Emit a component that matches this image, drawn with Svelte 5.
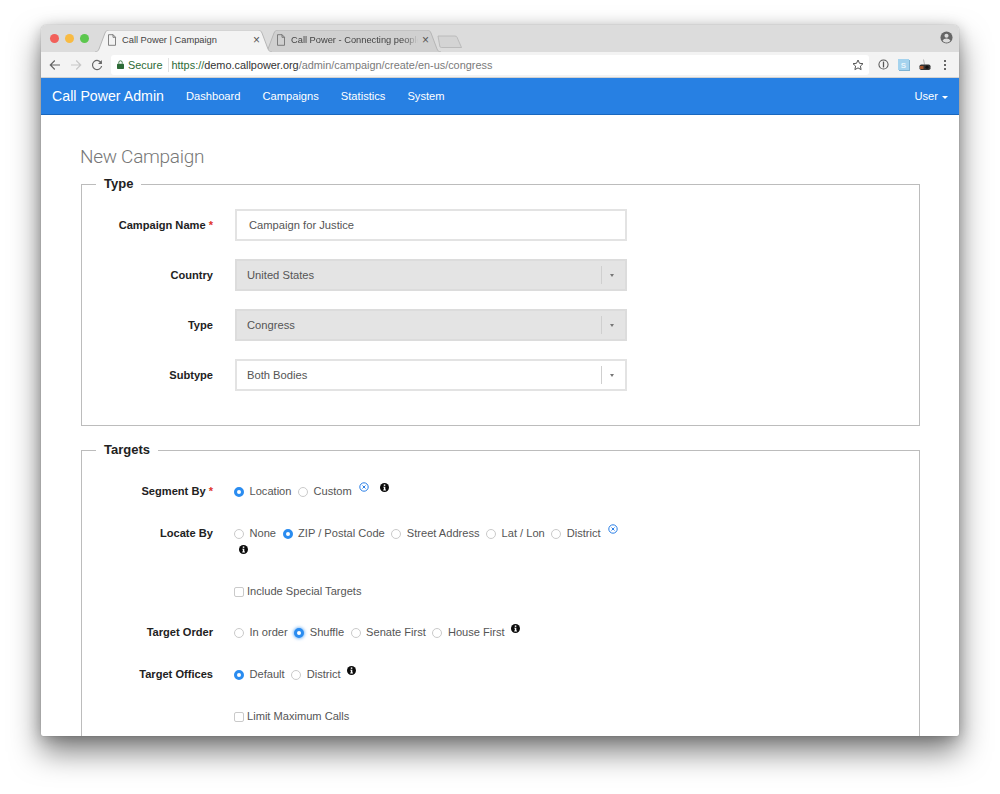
<script>
  const tabs = [
    { title: 'Call Power | Campaign', active: true },
    { title: 'Call Power - Connecting people', active: false }
  ];
  const selects = [
    { label: 'Country', value: 'United States', disabled: true },
    { label: 'Type', value: 'Congress', disabled: true },
    { label: 'Subtype', value: 'Both Bodies', disabled: false }
  ];
  const rows = [
    { label: 'Segment By', required: true, options: ['Location', 'Custom'], checked: 'Location', clear: true, info: true },
    { label: 'Locate By', options: ['None', 'ZIP / Postal Code', 'Street Address', 'Lat / Lon', 'District'], checked: 'ZIP / Postal Code', clear: true, info: true, wraps: true },
    { check: 'Include Special Targets' },
    { label: 'Target Order', options: ['In order', 'Shuffle', 'Senate First', 'House First'], checked: 'Shuffle', focus: true, info: true },
    { label: 'Target Offices', options: ['Default', 'District'], checked: 'Default', info: true },
    { check: 'Limit Maximum Calls' }
  ];
</script>

{#snippet pageIcon()}
  <svg class="page-icon" viewBox="0 0 10 12" width="10" height="12" aria-hidden="true">
    <path d="M1.5 .7h4.6l2.4 2.5v8.1h-7z M6 .7v2.6h2.5" fill="none" stroke="#666" stroke-width=".8" />
  </svg>
{/snippet}

{#snippet infoIcon()}
  <svg class="info" viewBox="0 0 10 10" width="9" height="9" aria-hidden="true">
    <circle cx="5" cy="5" r="5" fill="#0b0b0b" />
    <rect x="4.2" y="1.6" width="1.7" height="1.6" fill="#fff" />
    <path d="M3.6 4.1h2.3v3.2h.7v1h-3v-1h.7v-2.2h-.7z" fill="#fff" />
  </svg>
{/snippet}

{#snippet clearIcon()}
  <svg class="clear" viewBox="0 0 10 10" width="10" height="10" aria-hidden="true">
    <circle cx="5" cy="5" r="4.2" fill="none" stroke="#2a7fe6" stroke-width="1" />
    <path d="M3.5 3.5l3 3M6.5 3.5l-3 3" stroke="#2a7fe6" stroke-width="1" />
  </svg>
{/snippet}

<div class="page">
  <div class="window">
    <div class="tabstrip">
      <div class="lights">
        <span class="light red"></span>
        <span class="light yellow"></span>
        <span class="light green"></span>
      </div>
      {#each tabs as tab}
        <div class="tab" class:active={tab.active}>
          <svg class="tab-shape" viewBox="0 0 177 22" preserveAspectRatio="none" aria-hidden="true">
            <path d="M0 22 C2 22 3 21 4 19 L10 3 C11 1 12 0 14 0 H163 C165 0 166 1 167 3 L173 19 C174 21 175 22 177 22" />
          </svg>
          {@render pageIcon()}
          <span class="tab-title">{tab.title}</span>
          <span class="tab-close">×</span>
        </div>
      {/each}
      <svg class="new-tab" viewBox="0 0 26 13" width="26" height="13" aria-hidden="true">
        <path d="M1 1h17c1 0 1.600.4 2 1.200l4.500 10.300h-20c-1 0-1.500-.4-1.700-1.200z" fill="#d4d4d4" stroke="#b4b4b4" stroke-width=".8" />
      </svg>
      <svg class="profile" viewBox="0 0 14 14" width="13" height="13" aria-hidden="true">
        <circle cx="7" cy="7" r="6.500" fill="#666" />
        <circle cx="7" cy="5.200" r="2.200" fill="#dcdcdc" />
        <path d="M2.800 10.600c.8-1.700 2.500-2.400 4.200-2.400s3.400.7 4.200 2.400c-1 1.200-2.500 1.900-4.200 1.900s-3.200-.7-4.200-1.900z" fill="#dcdcdc" />
      </svg>
    </div>

    <div class="toolbar">
      <svg class="nav-btn" viewBox="0 0 12 12" width="12" height="12" aria-hidden="true">
        <path d="M11 6H1.600M5.800 1.500L1.300 6l4.500 4.500" fill="none" stroke="#666" stroke-width="1.200" />
      </svg>
      <svg class="nav-btn" viewBox="0 0 12 12" width="12" height="12" aria-hidden="true">
        <path d="M1 6h9.400M6.200 1.500L10.700 6l-4.500 4.500" fill="none" stroke="#c8c8c8" stroke-width="1.200" />
      </svg>
      <svg class="nav-btn" viewBox="0 0 12 12" width="12" height="12" aria-hidden="true">
        <path d="M10.300 4.200A4.600 4.600 0 1 0 10.600 7" fill="none" stroke="#666" stroke-width="1.200" />
        <path d="M10.900 1v4H7z" fill="#666" />
      </svg>
      <div class="omnibox">
        <svg class="lock" viewBox="0 0 8 10" width="7" height="9" aria-hidden="true">
          <path d="M2 4V2.800a2 2 0 0 1 4 0V4" fill="none" stroke="#2d6b36" stroke-width="1" />
          <rect y="4" width="8" height="6" rx=".8" fill="#2d6b36" />
        </svg>
        <span class="secure">Secure</span>
        <span class="url"><span class="https">https://</span><span class="host">demo.callpower.org</span>/admin/campaign/create/en-us/congress</span>
        <svg class="star" viewBox="0 0 12 12" width="12" height="12" aria-hidden="true">
          <path d="M6 1l1.500 3.300 3.500.4-2.600 2.400.7 3.500L6 8.900l-3.100 1.700.7-3.500L1 4.700l3.500-.4z" fill="none" stroke="#555" stroke-width="1" />
        </svg>
      </div>
      <div class="extensions">
        <svg viewBox="0 0 12 12" width="11" height="11" aria-hidden="true">
          <circle cx="6" cy="6" r="5" fill="none" stroke="#555" stroke-width="1.100" />
          <rect x="5.300" y="2.800" width="1.400" height="6.400" fill="#555" />
        </svg>
        <svg viewBox="0 0 12 12" width="12" height="12" aria-hidden="true">
          <rect width="11" height="11" fill="#a5d3ee" />
          <path d="M11 1h1v11H1v-1h10z" fill="#7fb3d2" />
          <text x="5.500" y="8.500" font-size="8" font-weight="700" font-family="Liberation Sans, sans-serif" fill="#eaf6fc" text-anchor="middle">S</text>
        </svg>
        <svg viewBox="0 0 12 12" width="12" height="12" aria-hidden="true">
          <path d="M4.500 .5l1 5" stroke="#999" stroke-width=".7" />
          <rect x=".5" y="5.500" width="11" height="5.500" rx="1.800" fill="#333" />
          <rect x="1" y="7" width="3.500" height="3" fill="#a8552b" />
          <circle cx="8" cy="8.200" r="1.600" fill="#111" />
        </svg>
        <svg class="dots" viewBox="0 0 4 12" width="4" height="12" aria-hidden="true">
          <circle cx="2" cy="2" r="1.100" fill="#444" />
          <circle cx="2" cy="6" r="1.100" fill="#444" />
          <circle cx="2" cy="10" r="1.100" fill="#444" />
        </svg>
      </div>
    </div>

    <nav class="navbar">
      <span class="brand">Call Power Admin</span>
      <a href="#dashboard">Dashboard</a>
      <a href="#campaigns">Campaigns</a>
      <a href="#statistics">Statistics</a>
      <a href="#system">System</a>
      <a class="user" href="#user">User <span class="caret"></span></a>
    </nav>

    <main class="content">
      <h1>New Campaign</h1>

      <fieldset class="type-set">
        <legend>Type</legend>
        <div class="field">
          <span class="label">Campaign Name <b>*</b></span>
          <div class="text-input">Campaign for Justice</div>
        </div>
        {#each selects as select}
          <div class="field">
            <span class="label">{select.label}</span>
            <div class="select" class:disabled={select.disabled}>
              <span>{select.value}</span>
              <i class="arrow"></i>
            </div>
          </div>
        {/each}
      </fieldset>

      <fieldset class="targets-set">
        <legend>Targets</legend>
        {#each rows as row}
          <div class="row" class:wraps={row.wraps}>
            <span class="label">
              {row.label ?? ''}
              {#if row.required}<b>*</b>{/if}
            </span>
            <div class="choices">
              {#if row.check}
                <span class="checkbox"></span>
                <span class="check-text">{row.check}</span>
              {:else}
                {#each row.options as option}
                  <span
                    class="radio"
                    class:on={option === row.checked}
                    class:focus={row.focus && option === row.checked}
                  ></span>
                  <span class="option">{option}</span>
                {/each}
                {#if row.clear}{@render clearIcon()}{/if}
                {#if row.info}{@render infoIcon()}{/if}
              {/if}
            </div>
          </div>
        {/each}
      </fieldset>
    </main>
  </div>
</div>

<style>
  :global(body) {
    margin: 0;
    background: #fff;
    font-family: "Liberation Sans", Arial, sans-serif;
  }

  .page {
    box-sizing: border-box;
    height: 794px;
    padding: 25px 41px 0;
    overflow: hidden;
  }

  .window {
    box-sizing: border-box;
    height: 711px;
    border-radius: 5px 5px 2px 2px;
    overflow: hidden;
    background: #fff;
    box-shadow: 0 0 1px rgba(0, 0, 0, .35), 0 16px 30px rgba(0, 0, 0, .5), 0 2px 14px rgba(0, 0, 0, .22);
    display: flex;
    flex-direction: column;
  }

  /* browser chrome */
  .tabstrip {
    flex: none;
    height: 27px;
    background: #dcdcdc;
    display: flex;
    align-items: flex-end;
  }
  .lights {
    display: flex;
    gap: 6px;
    width: 54px;
    flex: none;
    padding: 0 0 0 9px;
    box-sizing: border-box;
    align-self: center;
    margin-top: -1px;
  }
  .light { width: 9px; height: 9px; border-radius: 50%; }
  .red { background: #f2605a; }
  .yellow { background: #f8bb43; }
  .green { background: #5cc74e; }

  .tab {
    position: relative;
    flex: none;
    width: 177px;
    height: 22px;
    margin-right: -8px;
    box-sizing: border-box;
    padding: 0 10px 2px 12px;
    display: flex;
    align-items: center;
    font-size: 9.300px;
    color: #444;
  }
  .tab-shape {
    position: absolute;
    inset: 0;
    width: 100%;
    height: 100%;
    fill: #d0d0d0;
    stroke: #b6b6b6;
    stroke-width: 1;
  }
  .tab.active { z-index: 1; }
  .tab.active .tab-shape { fill: #f3f3f3; }
  .page-icon, .tab-title, .tab-close { position: relative; }
  .page-icon { flex: none; margin-right: 5px; }
  .tab-title {
    flex: 1;
    min-width: 0;
    white-space: nowrap;
    overflow: hidden;
    mask-image: linear-gradient(to left, transparent, #000 14px);
  }
  .active .tab-title { mask-image: none; }
  .tab-close {
    flex: none;
    width: 9px;
    margin-left: 4px;
    font-size: 12px;
    line-height: 12px;
    color: #555;
  }
  .new-tab { margin: 0 0 4px 4px; }
  .profile { margin: 0 6px 8px auto; }

  .toolbar {
    flex: none;
    height: 26px;
    box-sizing: border-box;
    background: #f3f3f3;
    border-bottom: 1px solid #d2d2d2;
    display: flex;
    align-items: center;
    padding: 0 12px 0 8px;
    gap: 9px;
  }
  .omnibox {
    flex: 1;
    height: 20px;
    margin-left: -1px;
    background: #fff;
    border-radius: 3px;
    display: flex;
    align-items: center;
    padding: 0 5px 0 6px;
    font-size: 10.900px;
    color: #7a7a7a;
    white-space: nowrap;
  }
  .lock { margin-right: 4px; }
  .secure {
    color: #2d6b36;
    padding-right: 5px;
    margin-right: 3px;
    border-right: 1px solid #e2e2e2;
    line-height: 14px;
  }
  .https { color: #2d6b36; }
  .host { color: #333; }
  .star { margin-left: auto; }
  .extensions {
    display: flex;
    align-items: center;
    gap: 9px;
  }
  .dots { margin-left: 3px; }

  .navbar {
    flex: none;
    height: 37px;
    box-sizing: border-box;
    background: #2780e3;
    border-bottom: 1px solid #1967be;
    display: flex;
    align-items: center;
    padding: 0 11px;
    font-size: 11.150px;
    color: #fff;
  }
  .brand { font-size: 14.200px; margin-right: 22px; }
  .navbar a { color: #fff; text-decoration: none; margin-right: 22px; }
  .navbar .user { margin: 0 0 0 auto; }
  .caret {
    display: inline-block;
    vertical-align: middle;
    margin-left: 1px;
    border-top: 3px solid #fff;
    border-left: 3px solid transparent;
    border-right: 3px solid transparent;
  }

  /* page */
  .content {
    padding: 0 39px 0 40px;
    flex: 1;
    min-height: 0;
    overflow: hidden;
  }
  h1 {
    margin: 30px 0 0 -1px;
    font-family: Roboto, sans-serif;
    font-weight: 300;
    font-size: 19px;
    letter-spacing: -.3px;
    line-height: 24px;
    color: #777;
  }
  fieldset {
    margin: 0;
    padding: 0;
    min-width: 0;
    border: 1px solid #bcbcbc;
  }
  legend {
    margin-left: 14px;
    padding: 0 8px;
    font-size: 13px;
    line-height: 16px;
    font-weight: 700;
    color: #222;
  }
  .type-set { margin-top: 7px; padding: 17px 0 16px; }
  .targets-set { margin-top: 16px; padding-top: 25px; height: 400px; }

  .label {
    flex: none;
    box-sizing: border-box;
    width: 131px;
    text-align: right;
    font-size: 11.100px;
    font-weight: 700;
    color: #222;
  }
  .label b { color: #e0342b; }

  .field {
    display: flex;
    align-items: center;
    gap: 22px;
    margin-bottom: 18px;
  }
  .text-input, .select {
    box-sizing: border-box;
    width: 392px;
    height: 32px;
    display: flex;
    align-items: center;
    font-size: 11.200px;
    color: #555;
    background: #fff;
    border: 2px solid #e3e3e3;
  }
  .text-input { padding-left: 12px; }
  .select { padding: 0 11px 0 10px; justify-content: space-between; position: relative; }
  .select.disabled { background: #e4e4e4; border-color: #dcdcdc; }
  .arrow {
    display: block;
    border-top: 3px solid #777;
    border-left: 2.750px solid transparent;
    border-right: 2.750px solid transparent;
  }
  .select::after {
    content: "";
    position: absolute;
    right: 23px;
    top: 5px;
    bottom: 5px;
    width: 1px;
    background: #cfcfcf;
  }

  .row {
    display: flex;
    gap: 21px;
    line-height: 17px;
    margin-bottom: 25px;
  }
  .row:nth-child(4) { margin-bottom: 24px; }
  .row.wraps { margin-bottom: 26px; }
  .choices {
    width: 392px;
    display: flex;
    flex-wrap: wrap;
    align-items: center;
    font-size: 11.100px;
    color: #555;
  }
  .radio {
    box-sizing: border-box;
    flex: none;
    width: 10px;
    height: 10px;
    border-radius: 50%;
    border: 1px solid #cacaca;
    background: #fff;
    margin-right: 5.500px;
  }
  .radio.on {
    border: 3.500px solid #2a8cf0;
    background: #fff;
  }
  .radio.focus { box-shadow: 0 0 3px 1px rgba(42, 140, 240, .55); }
  .option { margin-right: 6.500px; }
  .checkbox {
    box-sizing: border-box;
    flex: none;
    width: 10px;
    height: 10px;
    border: 1px solid #cacaca;
    border-radius: 2px;
    margin-right: 3px;
  }
  .clear { flex: none; margin: -9px 0 0 1px; }
  .info { flex: none; margin: -9px 0 0; }
  .clear + .info { margin-left: 11px; }
  .wraps .clear + .info { margin: 3px 0 3px 5px; }
</style>
